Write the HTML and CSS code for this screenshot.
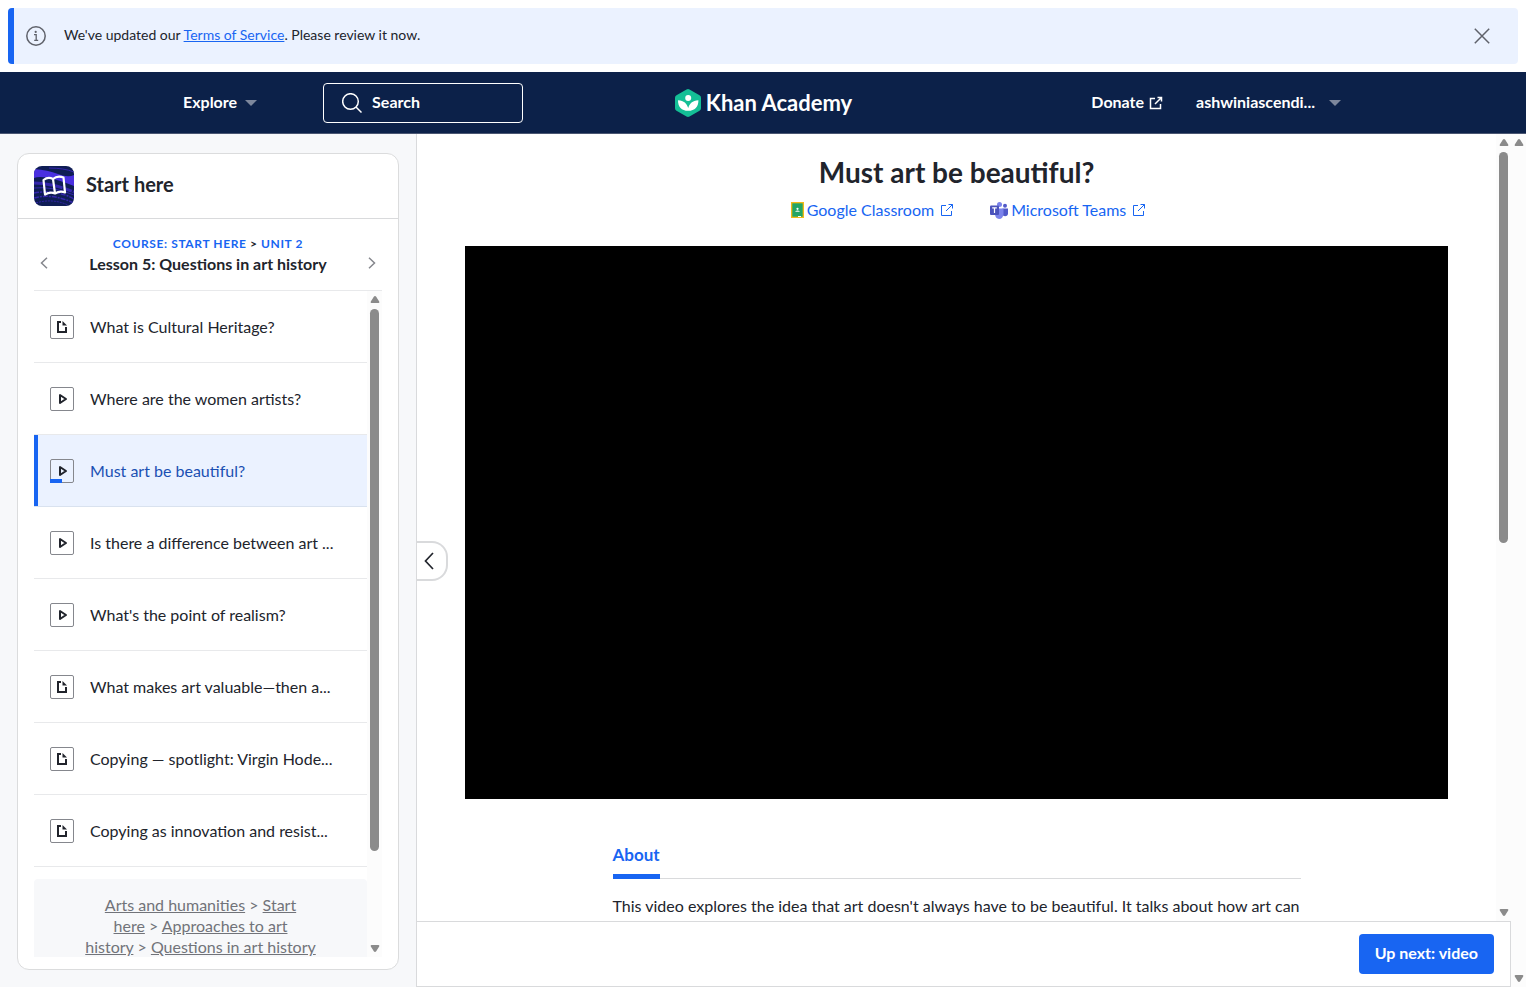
FILE: index.html
```html
<!DOCTYPE html>
<html lang="en">
<head>
<meta charset="utf-8">
<title>Must art be beautiful? | Khan Academy</title>
<link rel="stylesheet" href="styles.css">
</head>
<body>
<svg class="defs" aria-hidden="true">
  <symbol id="article" viewBox="0 0 24 24"><path d="M11 7H8V17H16V12" fill="none" stroke="#21242c" stroke-width="2"/><path d="M12.500 6V10.500H17Z" fill="#21242c"/></symbol>
  <symbol id="play" viewBox="0 0 24 24"><path d="M10 8V16L16 12Z" fill="none" stroke="#21242c" stroke-width="2" stroke-linejoin="round"/></symbol>
  <symbol id="external" viewBox="0 0 14 14"><path d="M6 2.500H1.500V12.500H11.500V8M8.500 1.500H12.500V5.500M12.500 1.500L6 8" fill="none" stroke="currentColor"/></symbol>
  <symbol id="caret" viewBox="0 0 12 6"><path d="M0 0H12L6 6Z" fill="currentColor"/></symbol>
  <symbol id="up" viewBox="0 0 10 8"><path d="M5 .5Q5.700 .5 6.200 1.300L9.200 6Q9.800 7.500 8.500 7.500H1.500Q.2 7.500 .8 6L3.800 1.300Q4.300 .5 5 .5Z" fill="#8b8b8b"/></symbol>
</svg>
<div class="page">
  <section class="banner">
    <svg class="info" viewBox="0 0 20 20"><circle cx="10" cy="10" r="9.200" fill="none" stroke="#5f626b" stroke-width="1.500"/><circle cx="9.700" cy="5.900" r="1.100" fill="#5f626b"/><path d="M8 8.700H10.200V14M8.200 14.300H12.200" fill="none" stroke="#5f626b" stroke-width="1.300"/></svg>
    <p class="notice">We've updated our <a href="#">Terms of Service</a>. Please review it now.</p>
    <button class="close" aria-label="Dismiss"><svg viewBox="0 0 16 16"><path d="M.8 .8L15.200 15.200M15.200 .8L.8 15.200" stroke="#5f626b" stroke-width="1.500"/></svg></button>
  </section>
  <header class="topbar">
    <div class="topbar-inner">
      <div class="top-left">
        <button class="top-item"><span>Explore</span><svg class="caret"><use href="#caret"/></svg></button>
        <button class="search"><svg viewBox="0 0 20 20"><circle cx="8.500" cy="8.500" r="7.800" fill="none" stroke="#fff" stroke-width="1.500"/><path d="M14 14L19.500 19.500" stroke="#fff" stroke-width="1.500"/></svg><span>Search</span></button>
      </div>
      <a class="brand" href="#">
        <svg viewBox="0 0 26 28"><path d="M11.500 .5Q13 -.3 14.500 .5L24.500 6.200Q26 7 26 8.800V19.200Q26 21 24.500 21.800L14.500 27.500Q13 28.300 11.500 27.500L1.500 21.800Q0 21 0 19.200V8.800Q0 7 1.500 6.200Z" fill="#14bf96"/><circle cx="13.200" cy="9" r="3" fill="#fff"/><path d="M13.200 21.800C6.500 21.800 2.900 17.700 3 11.200C9 11.500 11.900 14.500 13.200 19C14.500 14.500 17.400 11.500 23.400 11.200C23.500 17.700 19.900 21.800 13.200 21.800Z" fill="#fff"/></svg>
        <span>Khan Academy</span>
      </a>
      <div class="top-right">
        <a class="top-item donate" href="#"><span>Donate</span><svg class="ext bold"><use href="#external"/></svg></a>
        <button class="top-item user"><span>ashwiniascendi...</span><svg class="caret"><use href="#caret"/></svg></button>
      </div>
    </div>
  </header>
  <div class="workspace">
    <aside class="sidebar">
      <div class="card">
        <div class="card-head">
          <svg class="course" viewBox="0 0 40 40">
            <clipPath id="round"><rect width="40" height="40" rx="8"/></clipPath>
            <g clip-path="url(#round)"><rect width="40" height="40" fill="#0f1d55"/>
            <path d="M0 3Q14 4 24 8T40 9V20Q25 14 15 12T0 12Z" fill="#4a30e0"/>
            <g fill="none" stroke="#3526ac"><path d="M0 17Q18 17 40 26" stroke-width="3" stroke-dasharray="9 1"/><path d="M15 2Q30 2 40 6M0 22Q18 20 40 29" stroke-width="1"/><path d="M0 27Q22 23 40 33M0 32Q18 27 40 37" stroke-width="1.500" stroke-dasharray="5 1 2 1"/><path d="M2 37Q18 32 34 39" stroke-width="1" stroke-dasharray="2 1"/></g></g>
            <path d="M9.500 14Q14 10.500 19 13Q23.500 9 29.500 11.500L31 26.500Q26 24.500 21 27.500Q16 25.500 11 28.500ZM19 13L21 27.500" fill="none" stroke="#fff" stroke-width="2.200" stroke-linejoin="round"/>
          </svg>
          <h2>Start here</h2>
        </div>
        <div class="card-body">
          <nav class="lesson">
            <button class="arrow" aria-label="Previous lesson"><svg viewBox="0 0 8 12"><path d="M7 .8L1.500 6L7 11.200" fill="none" stroke="#85878d" stroke-width="1.500"/></svg></button>
            <div class="lesson-title">
              <p class="crumb"><a href="#">COURSE: START HERE</a> &gt; <a href="#">UNIT 2</a></p>
              <h3>Lesson 5: Questions in art history</h3>
            </div>
            <button class="arrow" aria-label="Next lesson"><svg viewBox="0 0 8 12"><path d="M1 .8L6.500 6L1 11.200" fill="none" stroke="#85878d" stroke-width="1.500"/></svg></button>
          </nav>
          <div class="scroller">
            <div class="scroll-view">
              <ul class="items">
                <li><a href="#"><span class="kind"><svg><use href="#article"/></svg></span><span class="name">What is Cultural Heritage?</span></a></li>
                <li><a href="#"><span class="kind"><svg><use href="#play"/></svg></span><span class="name">Where are the women artists?</span></a></li>
                <li class="current"><a href="#"><span class="kind"><svg><use href="#play"/></svg></span><span class="name">Must art be beautiful?</span></a></li>
                <li><a href="#"><span class="kind"><svg><use href="#play"/></svg></span><span class="name">Is there a difference between art ...</span></a></li>
                <li><a href="#"><span class="kind"><svg><use href="#play"/></svg></span><span class="name">What's the point of realism?</span></a></li>
                <li><a href="#"><span class="kind"><svg><use href="#article"/></svg></span><span class="name">What makes art valuable—then a...</span></a></li>
                <li><a href="#"><span class="kind"><svg><use href="#article"/></svg></span><span class="name">Copying — spotlight: Virgin Hode...</span></a></li>
                <li><a href="#"><span class="kind"><svg><use href="#article"/></svg></span><span class="name">Copying as innovation and resist...</span></a></li>
              </ul>
              <nav class="trail"><a href="#">Arts and humanities</a>&nbsp;&gt;&nbsp;<a href="#">Start here</a>&nbsp;&gt;&nbsp;<a href="#">Approaches to art history</a>&nbsp;&gt;&nbsp;<a href="#">Questions in art history</a></nav>
            </div>
            <div class="bar" aria-hidden="true"><svg><use href="#up"/></svg><div class="rail"><div class="thumb list-thumb"></div></div><svg class="down"><use href="#up"/></svg></div>
          </div>
        </div>
      </div>
    </aside>
    <div class="content">
      <div class="content-row">
        <main class="main">
          <h1>Must art be beautiful?</h1>
          <div class="share">
            <a href="#"><svg class="classroom" viewBox="0 0 13 16"><rect width="13" height="16" fill="#f4b916"/><rect x="1.300" y="1.300" width="10.400" height="13.400" fill="#23a566"/><circle cx="6.500" cy="6.800" r="1.100" fill="#fff"/><path d="M4 9.800Q6.500 7.200 9 9.800Z" fill="#fff"/><path d="M7 14H10V15H7Z" fill="#fff"/></svg>Google Classroom<svg class="ext"><use href="#external"/></svg></a>
            <a href="#"><svg class="teams" viewBox="0 0 18 17"><circle cx="15" cy="3.800" r="2" fill="#5059c9"/><circle cx="9.500" cy="2.600" r="2.500" fill="#7b83eb"/><path d="M12.500 6.500H18V11.500Q17.800 14.300 15 14.300Q13 14 12.500 13Z" fill="#5059c9"/><path d="M5 6.500H13.500V12Q13 17 9 17Q5.500 16.500 5 12.500Z" fill="#7b83eb"/><rect y="3.500" width="9" height="9.500" rx="1" fill="#4b53bc"/><path d="M2.200 5.800H6.800M4.500 5.800V11" stroke="#fff" stroke-width="1.200"/></svg>Microsoft Teams<svg class="ext"><use href="#external"/></svg></a>
          </div>
          <div class="video"></div>
          <section class="about">
            <div class="tabs"><button class="tab">About</button></div>
            <p>This video explores the idea that art doesn't always have to be beautiful. It talks about how art can</p>
          </section>
        </main>
        <div class="bar" aria-hidden="true"><svg><use href="#up"/></svg><div class="rail"><div class="thumb main-thumb"></div></div><svg class="down"><use href="#up"/></svg></div>
      </div>
      <footer class="next"><button>Up next: video</button></footer>
      <button class="fold" aria-label="Collapse sidebar"><svg viewBox="0 0 10 18"><path d="M9 1L1.500 9L9 17" fill="none" stroke="#21242c" stroke-width="1.700"/></svg></button>
    </div>
    <div class="bar" aria-hidden="true"><svg><use href="#up"/></svg><div class="rail"></div><svg class="down"><use href="#up"/></svg></div>
  </div>
</div>
</body>
</html>
```
FILE: styles.css
```css
* { box-sizing: border-box; }
body { margin: 0; font: 16px/20px Lato, "Noto Sans", sans-serif; color: #21242c; background: #fff; }
h1, h2, h3, p, ul { margin: 0; padding: 0; }
ul { list-style: none; }
a { color: #1865f2; text-decoration: none; }
button { font: inherit; color: inherit; background: none; border: 0; padding: 0; cursor: pointer; }
svg { display: block; flex: none; }
.defs { position: absolute; width: 0; height: 0; }
.page { display: flex; flex-direction: column; height: 100vh; overflow: hidden; }

.banner { display: flex; align-items: center; margin: 8px; height: 56px; flex: none; padding: 0 28px 0 12px; background: #ebf2ff; border-left: 6px solid #1865f2; border-radius: 4px; }
.info { width: 20px; height: 20px; }
.notice { flex: 1; margin-left: 18px; font-size: 14px; padding-bottom: 2px; }
.notice a { text-decoration: underline; }
.close svg { width: 16px; height: 16px; }

.topbar { flex: none; height: 62px; background: #0c2149; border-bottom: 1px solid #4a5672; color: #fff; }
.topbar-inner { display: grid; grid-template-columns: 1fr auto 1fr; align-items: center; max-width: 1200px; height: 61px; margin: 0 auto; padding: 0 22px 0 20px; font-weight: 700; }
.top-left, .top-right { display: flex; align-items: center; }
.top-left { gap: 66px; }
.top-right { justify-content: flex-end; gap: 33px; }
.top-item { display: flex; align-items: center; color: #fff; font-weight: 700; }
.top-item span, .search span { padding-bottom: 2px; }
.caret { width: 12px; height: 6px; margin-left: 8px; color: #7d879c; }
.user .caret { margin-left: 14px; }
.search { display: flex; align-items: center; gap: 10px; width: 200px; height: 40px; padding: 0 18px; border: 1px solid #fff; border-radius: 4px; font-weight: 700; }
.search svg { width: 20px; height: 20px; }
.brand { display: flex; align-items: center; gap: 5px; padding-left: 3px; color: #fff; font-size: 22px; line-height: 28px; }
.brand svg { width: 26px; height: 28px; }
.ext { width: 14px; height: 14px; margin-left: 6px; }
.bold { stroke-width: 1.500px; margin-left: 5px; }

.workspace { display: flex; flex: 1; min-height: 0; }
.sidebar { display: flex; flex: none; width: 417px; padding: 19px 17px 17px; background: #f7f8fa; border-right: 1px solid #d9dadc; }
.card { display: flex; flex-direction: column; flex: 1; min-width: 0; background: #fff; border: 1px solid #dbdcdd; border-radius: 12px; }
.card-head { display: flex; align-items: center; gap: 12px; padding: 12px 16px; border-bottom: 1px solid #d9dadc; }
.course { width: 40px; height: 40px; }
.card-head h2 { font-size: 20px; line-height: 24px; padding-bottom: 4px; }
.card-body { display: flex; flex-direction: column; flex: 1; min-height: 0; padding: 0 16px 12px; }
.lesson { display: flex; align-items: center; justify-content: space-between; height: 72px; flex: none; border-bottom: 1px solid #e8e9eb; }
.lesson-title { padding-bottom: 2px; text-align: center; }
.crumb { font-size: 12px; font-weight: 700; letter-spacing: 0.05em; }
.lesson h3 { font-size: 16px; }
.arrow { display: flex; align-items: center; justify-content: center; width: 20px; height: 40px; margin-top: 16px; }
.arrow svg { width: 8px; height: 12px; }
.scroller { display: flex; flex: 1; min-height: 0; }
.scroll-view { flex: 1; min-width: 0; overflow: hidden; }
.items a { display: flex; align-items: center; gap: 16px; height: 72px; padding: 1px 16px 0; border-bottom: 1px solid #e8e9eb; color: #21242c; }
.items .current a { background: #ebf2ff; box-shadow: inset 4px 0 #1865f2; border-bottom-color: #d9e2ef; color: #1b50b3; }
.kind { position: relative; flex: none; width: 24px; height: 24px; border: 1px solid #85878d; border-radius: 2px; }
.kind svg { width: 24px; height: 24px; margin: -1px; }
.current .kind::after { content: ""; position: absolute; left: -1px; bottom: -1px; width: 12px; height: 4px; background: #1865f2; }
.name { white-space: nowrap; }
.trail { margin-top: 12px; padding: 15px 48px; background: #f7f8fa; border-radius: 4px; text-align: center; line-height: 21px; color: #717379; }
.trail a { color: #717379; text-decoration: underline; }

.bar { display: flex; flex-direction: column; align-items: center; flex: none; width: 15px; padding: 4px 0; background: #fcfcfc; }
.bar svg { width: 10px; height: 9px; }
.bar .down { transform: rotate(180deg); }
.rail { flex: 1; width: 9px; padding: 5px 0; }
.thumb { border-radius: 5px; background: #8b8b8b; }
.list-thumb { height: 86%; }
.main-thumb { height: 52%; }

.content { position: relative; display: flex; flex-direction: column; flex: 1; min-width: 0; }
.content-row { display: flex; flex: 1; min-height: 0; }
.main { flex: 1; min-width: 0; padding: 22px 48px 0; overflow: hidden; }
.main h1 { font-size: 28px; line-height: 32px; text-align: center; }
.share { display: flex; justify-content: center; gap: 36px; margin: 12px 0 26px; padding-left: 24px; }
.share a { display: flex; align-items: center; }
.classroom { width: 13px; height: 16px; margin-right: 3px; }
.teams { width: 18px; height: 17px; margin-right: 3px; }
.video { aspect-ratio: 16 / 9; background: #000; }
.about { max-width: 688px; margin: 44px auto 0; }
.tabs { display: flex; border-bottom: 1px solid #d9dadc; }
.tab { height: 36px; margin-bottom: -1px; padding-bottom: 6px; border-bottom: 5px solid #1865f2; color: #1865f2; font-size: 17px; font-weight: 700; }
.about p { margin-top: 16px; line-height: 22px; }
.next { display: flex; justify-content: flex-end; flex: none; padding: 12px 16px; border: 1px solid #d9dadc; border-left: 0; background: #fff; }
.next button { height: 40px; padding: 0 16px 2px; border-radius: 4px; background: #1865f2; color: #fff; font-weight: 700; }
.fold { position: absolute; left: 0; top: 50%; display: flex; align-items: center; width: 31px; height: 40px; margin-top: -20px; padding-left: 7px; border: 2px solid #d9dadc; border-left: 0; border-radius: 0 16px 16px 0; background: #fff; }
.fold svg { width: 10px; height: 18px; }
```
